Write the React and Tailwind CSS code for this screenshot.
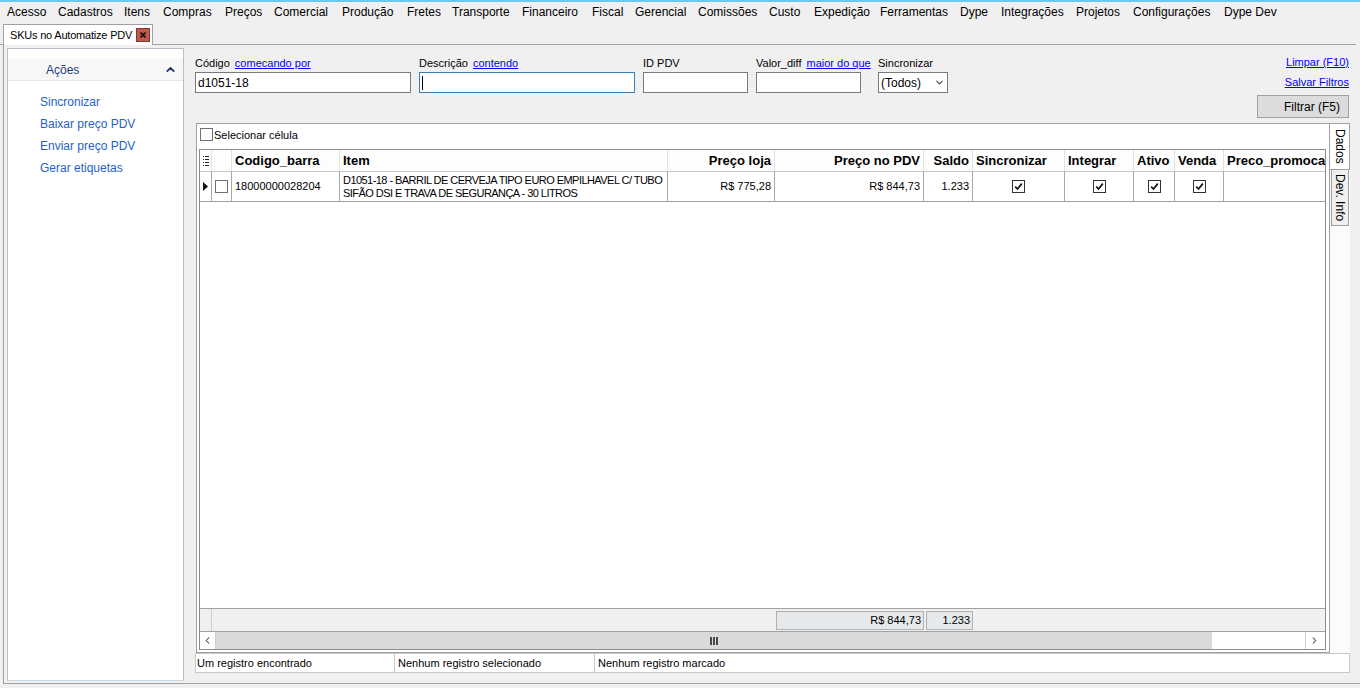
import React from 'react';
import { ChevronUp, ChevronDown, ChevronLeft, ChevronRight } from 'lucide-react';

const menu = [
  ['Acesso', 51], ['Cadastros', 66], ['Itens', 39], ['Compras', 62], ['Preços', 49],
  ['Comercial', 68], ['Produção', 65], ['Fretes', 45], ['Transporte', 70], ['Financeiro', 70],
  ['Fiscal', 43], ['Gerencial', 63], ['Comissões', 71], ['Custo', 45], ['Expedição', 66],
  ['Ferramentas', 80], ['Dype', 41], ['Integrações', 75], ['Projetos', 57], ['Configurações', 91],
  ['Dype Dev', 60],
];

const acoes = ['Sincronizar', 'Baixar preço PDV', 'Enviar preço PDV', 'Gerar etiquetas'];

const Box = ({ checked }) => (
  <span
    className={`w-[13px] h-[13px] shrink-0 border bg-white flex items-center justify-center ${
      checked ? 'border-[#333]' : 'border-[#707070]'
    }`}
  >
    {checked && (
      <svg width="9" height="9" viewBox="0 0 9 9">
        <path d="M1.2 4.6 L3.5 7 L7.8 1.6" stroke="#1a1a1a" strokeWidth="1.8" fill="none" />
      </svg>
    )}
  </span>
);

const Filter = ({ label, link, width, focused, children }) => (
  <div className="flex flex-col" style={{ width }}>
    <div className="h-[16px] leading-[16px] text-[11px] whitespace-nowrap">
      {label}
      {link && <span className="ml-[5px] text-[#0000ff] underline">{link}</span>}
    </div>
    <div
      className={`mt-[1px] h-[21px] bg-white border flex items-center px-[2px] text-[12px] ${
        focused ? 'border-[#3c7fb1]' : 'border-[#7a7a7a]'
      }`}
    >
      {children}
    </div>
  </div>
);

const Th = ({ w, right, children }) => (
  <div
    className={`h-full shrink-0 border-r border-[#e2e2e2] flex items-center px-[3px] font-bold text-[13px] whitespace-nowrap ${
      right ? 'justify-end' : ''
    }`}
    style={{ width: w }}
  >
    {children}
  </div>
);

const Td = ({ w, right, center, children }) => (
  <div
    className={`h-full shrink-0 border-r border-[#a9a9a9] flex items-center px-[3px] text-[11px] ${
      right ? 'justify-end' : ''
    } ${center ? 'justify-center' : ''}`}
    style={{ width: w }}
  >
    {children}
  </div>
);

export default function App() {
  return (
    <div className="w-[1360px] h-[688px] bg-[#f0f0f0] overflow-hidden text-black font-['Liberation_Sans',Arial,sans-serif]">
      <div className="h-[2px] bg-[#6dc8ea]" />

      <nav className="h-[20px] flex items-center pl-[7px] text-[12px]">
        {menu.map(([m, w]) => (
          <span key={m} className="whitespace-nowrap" style={{ width: w }}>
            {m}
          </span>
        ))}
      </nav>

      <div className="h-[23px] border-b border-[#a0a0a0] flex items-end pl-[3px] mr-[4px]">
        <div className="h-[21px] -mb-px w-[150px] bg-white border border-b-0 border-[#a0a0a0] flex items-center pl-[6px] text-[11px]">
          <span className="whitespace-nowrap tracking-[-0.2px]">SKUs no Automatize PDV</span>
          <span className="ml-auto mr-[2px] w-[14px] h-[14px] bg-[#c2574b] border border-[#7d3a31] flex items-center justify-center">
            <svg width="6" height="6" viewBox="0 0 6 6">
              <path d="M0.5 0.5 L5.5 5.5 M5.5 0.5 L0.5 5.5" stroke="#111" strokeWidth="1.6" />
            </svg>
          </span>
        </div>
      </div>

      <div className="ml-[3px] h-[639px] border-l border-b border-[#a0a0a0] flex pt-[3px]">
        {/* Left actions panel */}
        <aside className="ml-[3px] w-[177px] h-[633px] bg-white border border-[#b5c0ca] border-b-[#c9dbe8] pt-[10px]">
          <div className="h-[22px] bg-[#f7f7f7] border-b border-[#e3e7eb] flex items-center pl-[38px] pr-[6px] text-[12px] text-[#1f3f80]">
            <span>Ações</span>
            <ChevronUp className="ml-auto" size={13} strokeWidth={3.2} color="#1a2f6e" />
          </div>
          <ul className="pl-[32px] pt-[13px] flex flex-col gap-[6px] text-[12px] text-[#1f62c8]">
            {acoes.map((a) => (
              <li key={a} className="h-[16px] leading-[16px]">
                {a}
              </li>
            ))}
          </ul>
        </aside>

        {/* Main */}
        <main className="ml-[11px] w-[1155px] flex flex-col">
          <section className="h-[75px] flex">
            <div className="pt-[7px] flex">
              <Filter label="Código" link="comecando por" width={216}>
                d1051-18
              </Filter>
              <div className="ml-[8px]">
                <Filter label="Descrição" link="contendo" width={216} focused>
                  <span className="w-[1px] h-[14px] bg-black" />
                </Filter>
              </div>
              <div className="ml-[8px]">
                <Filter label="ID PDV" width={105} />
              </div>
              <div className="ml-[8px]">
                <Filter label="Valor_diff" link="maior do que" width={105} />
              </div>
              <div className="ml-[17px]">
                <Filter label="Sincronizar" width={70}>
                  <span className="flex-1">(Todos)</span>
                  <ChevronDown size={11} strokeWidth={2.4} color="#444" />
                </Filter>
              </div>
            </div>
            <div className="ml-auto pr-[1px] pt-[6px] flex flex-col items-end text-[11px]">
              <span className="h-[16px] leading-[16px] text-[#0000ff] underline">Limpar (F10)</span>
              <span className="mt-[4px] h-[16px] leading-[16px] text-[#0000ff] underline">Salvar Filtros</span>
              <button className="mt-[5px] w-[92px] h-[23px] bg-[#dcdcdc] border border-[#a0a0a0] flex items-center justify-end pr-[8px] text-[12px]">
                Filtrar (F5)
              </button>
            </div>
          </section>

          <section className="h-[530px] flex">
            <div className="ml-[1px] w-[1134px] h-full bg-white border border-[#a0a0a0] flex flex-col">
              <div className="h-[25px] flex items-start pt-[4px] pl-[3px] gap-[1px] text-[11px]">
                <Box />
                <span className="leading-[14px]">Selecionar célula</span>
              </div>

              <div className="ml-[2px] w-[1127px] h-[501px] border border-[#8c8c8c] flex flex-col overflow-hidden">
                {/* header */}
                <div className="h-[22px] shrink-0 flex border-b border-[#c8c8c8] bg-[#fdfdfd]">
                  <div className="w-[12px] h-full shrink-0 border-r border-[#e2e2e2] flex items-center justify-center">
                    <svg width="6" height="10" viewBox="0 0 6 10">
                      <g fill="#222">
                        <rect x="0" y="0" width="1" height="1" />
                        <rect x="2" y="0" width="4" height="1" />
                        <rect x="0" y="3" width="1" height="1" />
                        <rect x="2" y="3" width="4" height="1" />
                        <rect x="0" y="6" width="1" height="1" />
                        <rect x="2" y="6" width="4" height="1" />
                        <rect x="0" y="9" width="1" height="1" />
                        <rect x="2" y="9" width="4" height="1" />
                      </g>
                    </svg>
                  </div>
                  <Th w={20} />
                  <Th w={108}>Codigo_barra</Th>
                  <Th w={328}>Item</Th>
                  <Th w={107} right>Preço loja</Th>
                  <Th w={149} right>Preço no PDV</Th>
                  <Th w={49} right>Saldo</Th>
                  <Th w={92}>Sincronizar</Th>
                  <Th w={69}>Integrar</Th>
                  <Th w={41}>Ativo</Th>
                  <Th w={49}>Venda</Th>
                  <Th w={140}>Preco_promocao</Th>
                </div>

                {/* data row */}
                <div className="h-[30px] shrink-0 flex border-b border-[#a0a0a0]">
                  <div className="w-[12px] h-full shrink-0 border-r border-[#a9a9a9] flex items-center justify-center">
                    <svg width="5" height="9" viewBox="0 0 5 9">
                      <path d="M0 0 L5 4.5 L0 9 Z" fill="#111" />
                    </svg>
                  </div>
                  <Td w={20} center>
                    <Box />
                  </Td>
                  <Td w={108}>18000000028204</Td>
                  <Td w={328}>
                    <span className="leading-[13px] whitespace-nowrap tracking-[-0.55px]">
                      D1051-18 - BARRIL DE CERVEJA TIPO EURO EMPILHAVEL C/ TUBO
                      <br />
                      SIFÃO DSI E TRAVA DE SEGURANÇA - 30 LITROS
                    </span>
                  </Td>
                  <Td w={107} right>R$ 775,28</Td>
                  <Td w={149} right>R$ 844,73</Td>
                  <Td w={49} right>1.233</Td>
                  <Td w={92} center><Box checked /></Td>
                  <Td w={69} center><Box checked /></Td>
                  <Td w={41} center><Box checked /></Td>
                  <Td w={49} center><Box checked /></Td>
                  <Td w={140} />
                </div>

                <div className="flex-1 bg-white" />

                {/* totals */}
                <div className="h-[23px] shrink-0 border-t border-[#a0a0a0] bg-[#f0f0f0] flex items-start text-[11px]">
                  <div className="w-[12px] h-full border-r border-[#d0d0d0]" />
                  <div className="ml-[564px] mt-[2px] w-[148px] h-[19px] bg-[#e5e9eb] border border-[#b0b0b0] flex items-center justify-end pr-[2px]">
                    R$ 844,73
                  </div>
                  <div className="ml-[2px] mt-[2px] w-[47px] h-[19px] bg-[#e5e9eb] border border-[#b0b0b0] flex items-center justify-end pr-[2px]">
                    1.233
                  </div>
                </div>

                {/* horizontal scrollbar */}
                <div className="h-[18px] shrink-0 border-t border-[#a0a0a0] flex bg-white">
                  <div className="w-[16px] h-full flex items-center justify-center border-r border-[#d0d0d0]">
                    <ChevronLeft size={11} strokeWidth={2.2} color="#404040" />
                  </div>
                  <div className="w-[996px] h-full bg-[#dadada] flex items-center justify-center">
                    <svg width="8" height="8" viewBox="0 0 8 8">
                      <g fill="#4a4a4a">
                        <rect x="0" y="0" width="2" height="8" />
                        <rect x="3" y="0" width="2" height="8" />
                        <rect x="6" y="0" width="2" height="8" />
                      </g>
                    </svg>
                  </div>
                  <div className="w-[93px] h-full" />
                  <div className="w-[17px] h-full flex items-center justify-center border-l border-[#d0d0d0]">
                    <ChevronRight size={11} strokeWidth={2.2} color="#404040" />
                  </div>
                </div>
              </div>
            </div>

            {/* vertical tabs */}
            <div className="w-[20px] h-full bg-[#fbfbfb] flex flex-col">
              <div className="h-[47px] bg-white border border-l-0 border-[#a0a0a0] flex items-center justify-center text-[12px] [writing-mode:vertical-rl]">
                Dados
              </div>
              <div className="ml-[1px] w-[18px] h-[56px] bg-[#f0f0f0] border border-t-0 border-[#a0a0a0] flex items-center justify-center text-[12px] [writing-mode:vertical-rl]">
                Dev. Info
              </div>
            </div>
          </section>

          <footer className="h-[20px] bg-white border border-[#c8c8c8] flex text-[11px]">
            <div className="w-[199px] h-full border-r border-[#c8c8c8] flex items-center pl-[1px]">
              Um registro encontrado
            </div>
            <div className="w-[200px] h-full border-r border-[#c8c8c8] flex items-center pl-[3px]">
              Nenhum registro selecionado
            </div>
            <div className="flex-1 h-full flex items-center pl-[3px]">Nenhum registro marcado</div>
          </footer>
        </main>
      </div>
    </div>
  );
}
